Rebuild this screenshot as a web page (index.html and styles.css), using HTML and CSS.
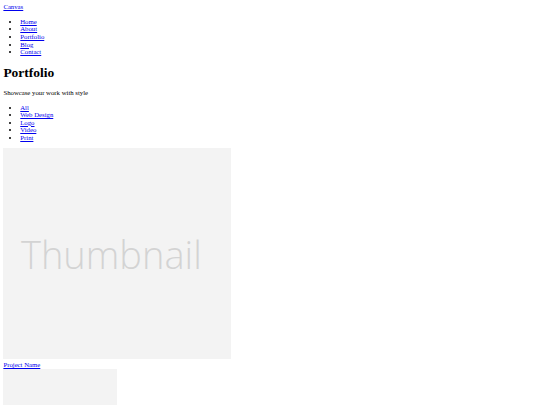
FILE: index.html
```html
<!DOCTYPE html>
<html lang="en">
<head>
<meta charset="utf-8">
<title>Portfolio</title>
<link rel="stylesheet" href="styles.css">
</head>
<body class="page">
<header class="site-header">
  <a class="brand" href="#">Canvas</a>
  <nav>
    <ul class="list">
      <li><a href="#">Home</a></li>
      <li><a href="#">About</a></li>
      <li><a href="#">Portfolio</a></li>
      <li><a href="#">Blog</a></li>
      <li><a href="#">Contact</a></li>
    </ul>
  </nav>
</header>
<main>
  <h1 class="title">Portfolio</h1>
  <p class="lead">Showcase your work with style</p>
  <ul class="list">
    <li><a href="#">All</a></li>
    <li><a href="#">Web Design</a></li>
    <li><a href="#">Logo</a></li>
    <li><a href="#">Video</a></li>
    <li><a href="#">Print</a></li>
  </ul>
  <div class="grid">
    <div class="item">
      <div class="thumb thumb-large"><span class="thumb-label">Thumbnail</span></div>
      <a class="item-link" href="#">Project Name</a>
    </div>
    <div class="item">
      <div class="thumb thumb-small"></div>
    </div>
  </div>
</main>
</body>
</html>
```

FILE: styles.css
```css
html {
  background: #fff;
}
.page {
  margin: 3.375px;
  font-family: "Liberation Serif", "Times New Roman", serif;
  font-size: 6.75px;
  line-height: 7.594px;
  color: #000;
}
a {
  color: #0000ee;
}
.list {
  margin: 6.75px 0;
  padding-left: 16.875px;
  list-style: disc;
}
.title {
  font-size: 13.5px;
  line-height: 15.6px;
  font-weight: bold;
  margin: 9.045px 0;
}
.lead {
  margin: 6.75px 0;
}
.grid {
  display: block;
}
.item {
  display: block;
}
.thumb {
  background: #f3f3f3;
  display: flex;
  align-items: center;
  justify-content: center;
  overflow: hidden;
}
.thumb-large {
  width: 228px;
  height: 211px;
  margin-bottom: 2px;
}
.thumb-small {
  width: 114px;
  height: 106px;
}
.thumb-label {
  font-family: "Open Sans", sans-serif;
  font-weight: 300;
  font-size: 38px;
  color: #d3d3d3;
  line-height: 1;
  padding-right: 12px;
}
.item-link {
  display: block;
}
```
